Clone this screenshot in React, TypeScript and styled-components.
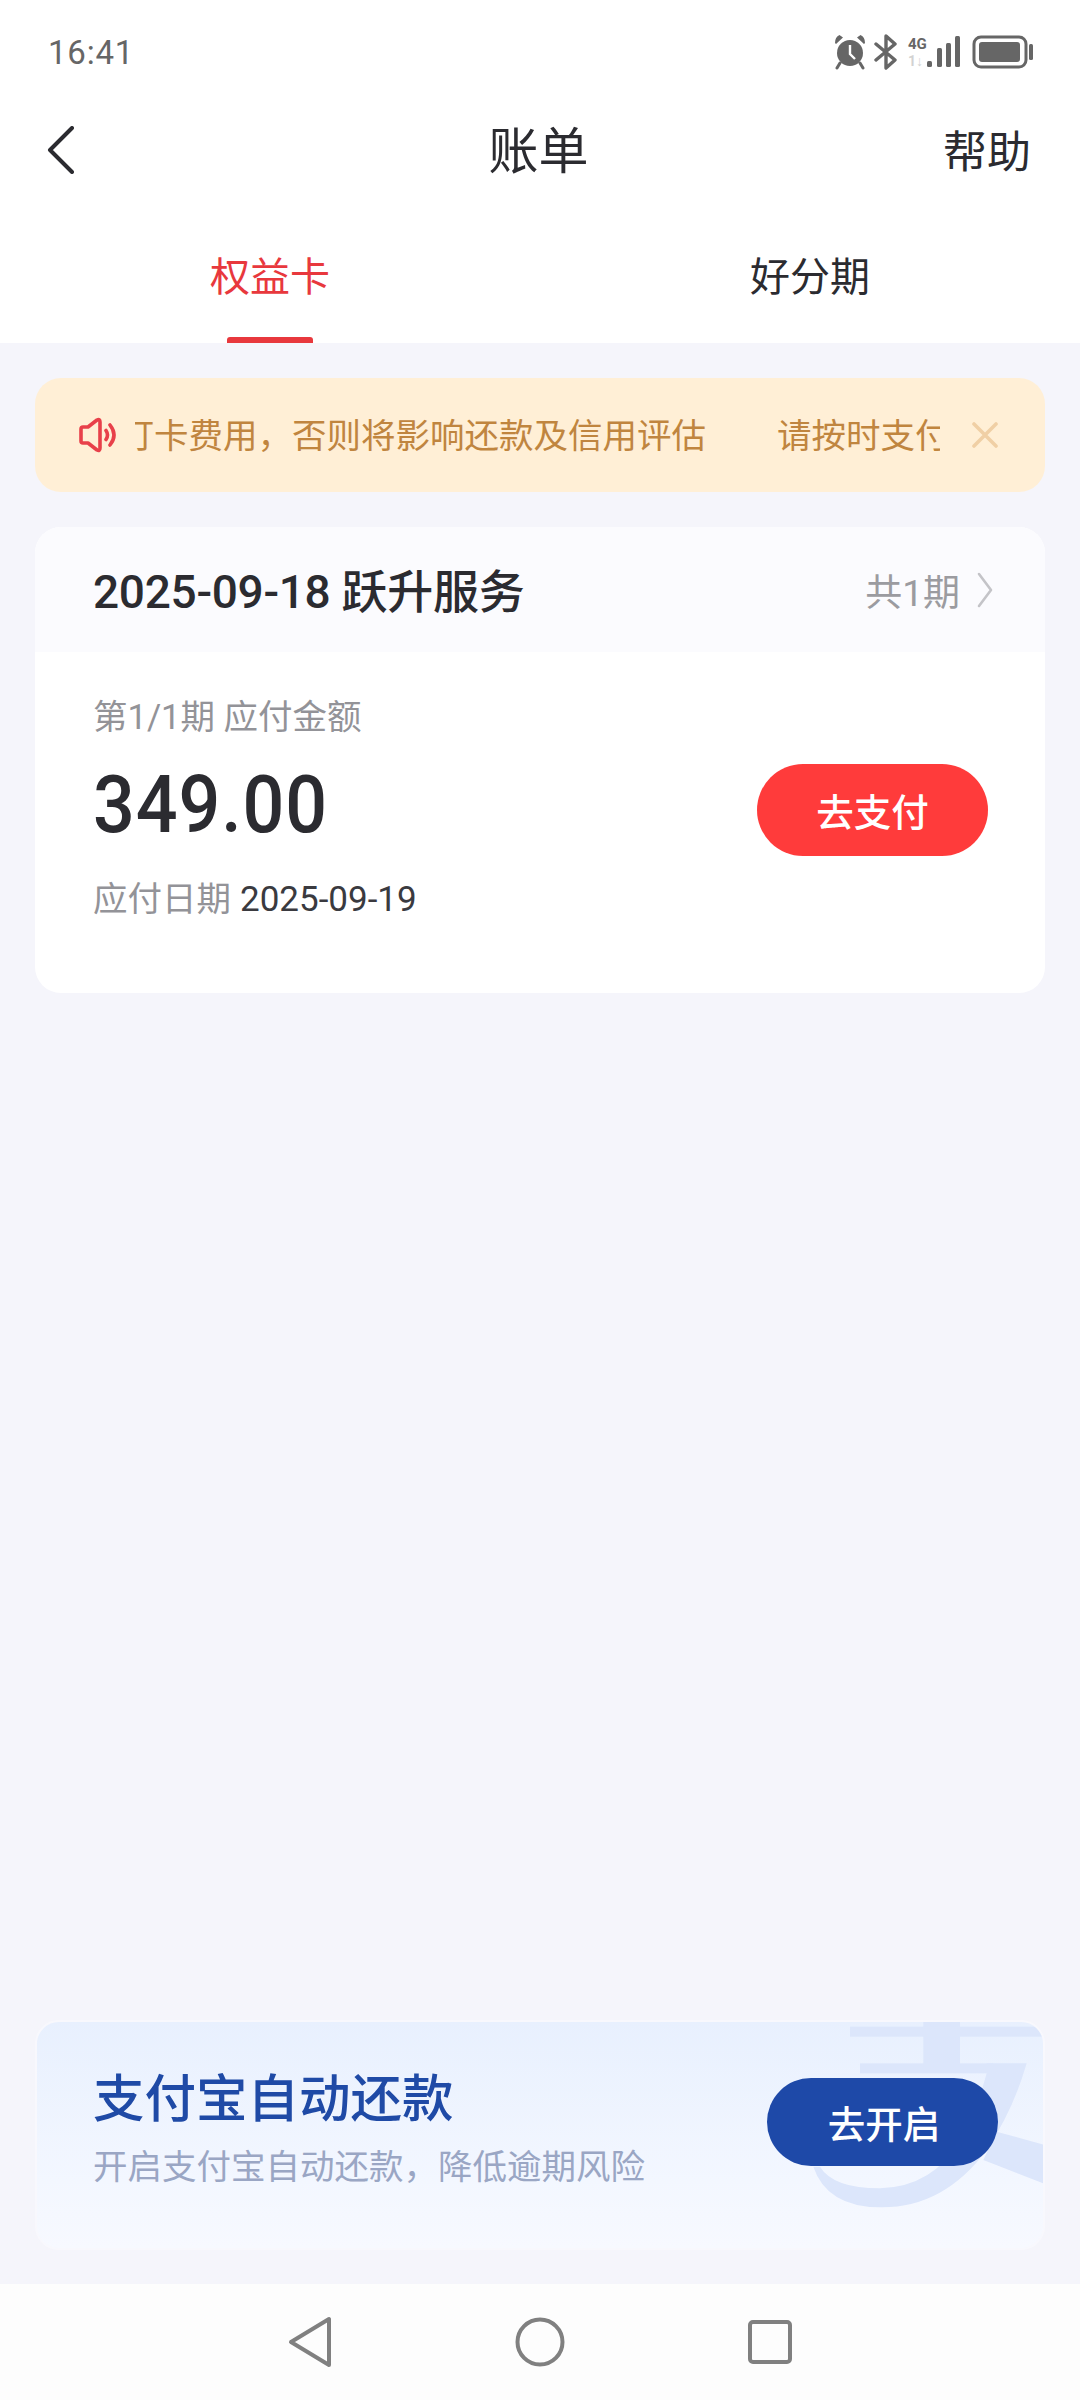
import styled, { createGlobalStyle } from "styled-components";

const CJK = `"Noto Sans CJK SC", sans-serif`;
const NUM = `Roboto, "Noto Sans CJK SC", sans-serif`;

const GlobalStyle = createGlobalStyle`
  html, body {
    margin: 0;
    padding: 0;
    background: #f5f5fb;
  }
  * {
    box-sizing: border-box;
  }
`;

const Page = styled.div`
  width: 1080px;
  height: 2400px;
  display: flex;
  flex-direction: column;
  background: #f5f5fb;
  font-family: ${CJK};
  color: #2b2b30;
  overflow: hidden;
`;

const Top = styled.div`
  background: #fff;
  height: 343px;
  flex: none;
`;

const StatusBar = styled.div`
  height: 104px;
  padding: 0 43px 0 48px;
  display: flex;
  align-items: center;
  justify-content: space-between;
`;

const Clock = styled.span`
  font-family: ${NUM};
  font-size: 33px;
  color: #666;
  letter-spacing: 0.8px;
`;

const NavRow = styled.div`
  height: 92px;
  padding: 0 49px 0 46px;
  display: grid;
  grid-template-columns: 1fr auto 1fr;
  align-items: center;
`;

const Title = styled.div`
  font-size: 50px;
  line-height: 60px;
  margin-top: -6px;
`;

const Help = styled.div`
  justify-self: end;
  font-size: 44px;
  line-height: 56px;
  margin-top: -2px;
`;

const Tabs = styled.div`
  display: grid;
  grid-template-columns: 540px 540px;
  height: 147px;
`;

const Tab = styled.div<{ $active?: boolean }>`
  position: relative;
  display: flex;
  justify-content: center;
  padding-top: 47px;
  font-size: 40px;
  line-height: 62px;
  color: ${(p) => (p.$active ? "#e8383d" : "#2b2b30")};

  ${(p) =>
    p.$active &&
    `
    &::after {
      content: "";
      position: absolute;
      left: 227px;
      bottom: 0;
      width: 86px;
      height: 6px;
      border-radius: 3px 3px 0 0;
      background: #e8383d;
    }
  `}
`;

const Main = styled.div`
  flex: 1;
  display: flex;
  flex-direction: column;
  padding: 35px 35px 34px;
`;

const Notice = styled.div`
  height: 114px;
  border-radius: 26px;
  background: #ffefd6;
  display: flex;
  align-items: center;
  padding: 0 46px 0 43px;
`;

const NoticeClip = styled.div`
  width: 805px;
  margin-left: 17px;
  margin-right: 32px;
  overflow: hidden;
  white-space: nowrap;
  margin-top: -5px;
`;

const NoticeText = styled.div`
  display: inline-flex;
  gap: 71px;
  transform: translateX(-188px);
  font-size: 34.5px;
  line-height: 48px;
  color: #c0853f;
`;

const BillCard = styled.div`
  margin-top: 35px;
  height: 466px;
  border-radius: 26px;
  background: #fff;
  overflow: hidden;
`;

const BillHead = styled.div`
  height: 125px;
  background: #fbfbfe;
  display: flex;
  align-items: center;
  justify-content: space-between;
  padding: 0 52px 0 58px;
`;

const BillName = styled.div`
  font-family: ${NUM};
  font-size: 46px;
  font-weight: 500;
  letter-spacing: -0.3px;
  margin-top: -3px;
  color: #2b2b30;
`;

const BillCount = styled.div`
  display: flex;
  align-items: center;
  gap: 17px;
  font-family: ${NUM};
  font-size: 37px;
  color: #9b9ba0;
`;

const BillBody = styled.div`
  padding: 43px 57px 0 58px;
  display: flex;
  align-items: center;
  justify-content: space-between;
`;

const Muted = styled.div`
  font-family: ${NUM};
  font-size: 34.5px;
  line-height: 44px;
  color: #939398;
`;

const Amount = styled.div`
  font-family: ${NUM};
  font-size: 80px;
  line-height: 96px;
  font-weight: 500;
  letter-spacing: 1px;
  margin-top: 18px;
  color: #2b2b30;
  transform: scaleX(0.92);
  transform-origin: left center;
`;

const DueDate = styled(Muted)`
  margin-top: 24px;
`;

const DueValue = styled.span`
  color: #3a3a3f;
  font-size: 35px;
  margin-left: 9px;
`;

const PillButton = styled.div<{ $bg: string }>`
  flex: none;
  border-radius: 48px;
  background: ${(p) => p.$bg};
  color: #fff;
  font-size: 37.5px;
  font-weight: 500;
  display: flex;
  align-items: center;
  justify-content: center;
`;

const PayButton = styled(PillButton)`
  width: 231px;
  height: 92px;
  margin-top: 2px;
`;

const Promo = styled.div`
  position: relative;
  margin-top: auto;
  height: 230px;
  border-radius: 24px;
  border: 2px solid #f8f8fd;
  overflow: hidden;
  background: linear-gradient(180deg, #e8f0fe 0%, #f3f7ff 70%, #f7f9ff 100%);
  display: flex;
  align-items: center;
  justify-content: space-between;
  padding: 0 45px 0 56px;
`;

const PromoMark = styled.svg`
  position: absolute;
  right: -2px;
  top: -2px;
`;

const PromoText = styled.div`
  position: relative;
  margin-top: -22px;
`;

const PromoTitle = styled.div`
  font-size: 51.5px;
  line-height: 66px;
  font-weight: 500;
  color: #1f4aa6;
`;

const PromoSub = styled.div`
  margin-top: 13px;
  font-size: 34.5px;
  line-height: 46px;
  color: #9aa6c4;
`;

const OpenButton = styled(PillButton)`
  position: relative;
  width: 231px;
  height: 88px;
  margin-top: -27px;
  padding-left: 3px;
`;

const BottomNav = styled.div`
  flex: none;
  height: 116px;
  background: #fdfdfd;
  display: grid;
  grid-template-columns: 52px 52px 52px;
  justify-content: center;
  justify-items: center;
  column-gap: 178px;
  align-items: center;
`;

const StatusIcons = () => (
  <svg width="204" height="36" viewBox="0 0 204 36">
    <g fill="#666">
      <circle cx="17" cy="19" r="13" />
      <path d="M3 10 L10 3.5 L6.5 1 Q2 3 2 9 Z M31 10 L24 3.5 L27.5 1 Q32 3 32 9 Z" />
      <path d="M7 29 L4 34 M27 29 L30 34" stroke="#666" strokeWidth="3" strokeLinecap="round" />
      <path d="M17 11 V20 L22 25" stroke="#fff" strokeWidth="2.4" fill="none" />
    </g>
    <path
      d="M43 10 L62 26 L53 34 V2 L62 10 L43 26"
      fill="none"
      stroke="#666"
      strokeWidth="3.4"
      strokeLinejoin="round"
      strokeLinecap="round"
    />
    <text x="75" y="15" fontFamily="Roboto, sans-serif" fontSize="15" fontWeight="700" fill="#666">
      4G
    </text>
    <text x="75" y="32" fontFamily="Roboto, sans-serif" fontSize="14" fontWeight="700" fill="#d2d2d2">
      1↓
    </text>
    <g fill="#666">
      <rect x="94" y="27" width="5" height="6" rx="1.5" />
      <rect x="104" y="14" width="5" height="19" rx="1.5" />
      <rect x="113" y="9" width="5" height="24" rx="1.5" />
      <rect x="122" y="2" width="5" height="31" rx="1.5" />
    </g>
    <rect x="141" y="3" width="52" height="30" rx="7" fill="none" stroke="#666" strokeWidth="3" />
    <rect x="146" y="8" width="41" height="20" rx="3" fill="#666" />
    <rect x="196" y="10" width="4" height="16" rx="1.5" fill="#666" />
  </svg>
);

const BackIcon = () => (
  <svg width="30" height="48" viewBox="0 0 30 48">
    <path d="M26 2 L4 24 L26 46" fill="none" stroke="#2b2b30" strokeWidth="4" strokeLinecap="round" strokeLinejoin="round" />
  </svg>
);

const SpeakerIcon = () => (
  <svg width="40" height="36" viewBox="0 0 40 36" style={{ flex: "none" }}>
    <path
      d="M3 12 Q3 10 5 10 H10 L19 3 Q22 1.5 22 5 V31 Q22 34.5 19 33 L10 26 H5 Q3 26 3 24 Z"
      fill="none"
      stroke="#e8404a"
      strokeWidth="3.6"
      strokeLinejoin="round"
    />
    <path d="M28 13.5 Q31 18 28 22.5 M32 8 Q40 18 32 28" fill="none" stroke="#e8404a" strokeWidth="3.6" strokeLinecap="round" />
  </svg>
);

const CloseIcon = () => (
  <svg width="26" height="26" viewBox="0 0 26 26" style={{ flex: "none" }}>
    <path d="M2 2 L24 24 M24 2 L2 24" stroke="#f0cfa5" strokeWidth="3.6" strokeLinecap="round" />
  </svg>
);

const ChevronIcon = () => (
  <svg width="16" height="36" viewBox="0 0 16 36">
    <path d="M2 2 L14 18 L2 34" fill="none" stroke="#c4c4c8" strokeWidth="2.6" strokeLinecap="round" strokeLinejoin="round" />
  </svg>
);

const AlipayMark = () => (
  <PromoMark width="240" height="230" viewBox="0 0 720 690">
    <g fill="#dce6fb" transform="translate(-255 -60)">
      <rect x="390" y="80" width="590" height="30" />
      <rect x="610" y="60" width="110" height="140" />
      <rect x="420" y="190" width="400" height="30" />
      <path d="M800 190 H920 Q880 330 800 450 Q670 625 480 622 Q320 620 280 500 L300 500 Q340 565 480 565 Q640 560 720 420 Q775 320 800 220 Z" />
      <path d="M830 395 L975 435 V552 L790 480 Z" />
    </g>
  </PromoMark>
);

const BackNav = () => (
  <svg width="46" height="52" viewBox="0 0 46 52">
    <path d="M42 3 V49 L4 26 Z" fill="none" stroke="#808080" strokeWidth="4" strokeLinejoin="round" />
  </svg>
);

const HomeNav = () => (
  <svg width="52" height="52" viewBox="0 0 52 52">
    <circle cx="26" cy="26" r="22.5" fill="none" stroke="#808080" strokeWidth="4" />
  </svg>
);

const RecentNav = () => (
  <svg width="46" height="46" viewBox="0 0 46 46">
    <rect x="3" y="3" width="40" height="40" rx="3" fill="none" stroke="#808080" strokeWidth="4" />
  </svg>
);

const NOTICE = "请按时支付打卡费用，否则将影响还款及信用评估";

const App = () => {
  return (
    <Page>
      <GlobalStyle />
      <Top>
        <StatusBar>
          <Clock>16:41</Clock>
          <StatusIcons />
        </StatusBar>
        <NavRow>
          <BackIcon />
          <Title>账单</Title>
          <Help>帮助</Help>
        </NavRow>
        <Tabs>
          <Tab $active>权益卡</Tab>
          <Tab>好分期</Tab>
        </Tabs>
      </Top>
      <Main>
        <Notice>
          <SpeakerIcon />
          <NoticeClip>
            <NoticeText>
              <span>{NOTICE}</span>
              <span>{NOTICE}</span>
            </NoticeText>
          </NoticeClip>
          <CloseIcon />
        </Notice>
        <BillCard>
          <BillHead>
            <BillName>2025-09-18 跃升服务</BillName>
            <BillCount>
              共1期
              <ChevronIcon />
            </BillCount>
          </BillHead>
          <BillBody>
            <div>
              <Muted>第1/1期 应付金额</Muted>
              <Amount>349.00</Amount>
              <DueDate>
                应付日期<DueValue>2025-09-19</DueValue>
              </DueDate>
            </div>
            <PayButton $bg="#ff3b3b">去支付</PayButton>
          </BillBody>
        </BillCard>
        <Promo>
          <AlipayMark />
          <PromoText>
            <PromoTitle>支付宝自动还款</PromoTitle>
            <PromoSub>开启支付宝自动还款，降低逾期风险</PromoSub>
          </PromoText>
          <OpenButton $bg="#1e49a8">去开启</OpenButton>
        </Promo>
      </Main>
      <BottomNav>
        <BackNav />
        <HomeNav />
        <RecentNav />
      </BottomNav>
    </Page>
  );
};

export default App;
